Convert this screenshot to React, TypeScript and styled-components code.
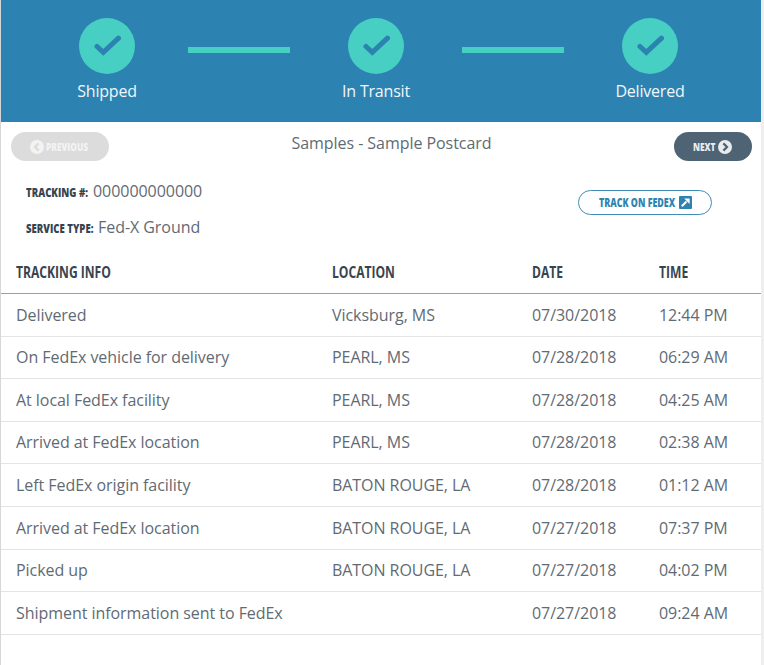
import * as React from "react";
import styled, { createGlobalStyle } from "styled-components";

const GlobalStyle = createGlobalStyle`
  html, body {
    margin: 0;
    padding: 0;
    background: #fff;
    font-family: "Open Sans", "Noto Sans", sans-serif;
  }
`;

const Page = styled.div`
  box-sizing: border-box;
  width: 764px;
  height: 665px;
  overflow: hidden;
  border-left: 1px solid #d4d6d8;
  border-right: 3px solid #eeeeee;
  color: #5a6670;
`;

const Header = styled.div`
  display: flex;
  align-items: flex-start;
  gap: 26px;
  box-sizing: border-box;
  height: 122px;
  padding: 18px 0 0 46px;
  background: #2c82b0;
`;

const Step = styled.div`
  display: flex;
  flex-direction: column;
  align-items: center;
  width: 120px;
  &:first-child {
    margin-right: -5px;
  }
`;

const Circle = styled.div`
  display: flex;
  align-items: center;
  justify-content: center;
  width: 56px;
  height: 56px;
  border-radius: 50%;
  background: #47cfc4;
`;

const StepLabel = styled.div`
  margin-top: 6px;
  font-size: 16px;
  font-weight: 500;
  line-height: 22px;
  letter-spacing: -0.2px;
  color: #f1f7fa;
`;

const Connector = styled.div`
  width: 102px;
  height: 6px;
  margin-top: 29px;
  background: #47cfc4;
`;

const NavRow = styled.div`
  display: flex;
  align-items: center;
  justify-content: space-between;
  height: 29px;
  margin-top: 10px;
  padding: 0 9px 0 10px;
`;

const PillButton = styled.div<{ $disabled?: boolean }>`
  display: flex;
  align-items: center;
  justify-content: center;
  gap: 2px;
  box-sizing: border-box;
  width: ${(p) => (p.$disabled ? "98px" : "78px")};
  height: 29px;
  border-radius: 15px;
  background: ${(p) => (p.$disabled ? "#dcdcdc" : "#4e6475")};
  color: ${(p) => (p.$disabled ? "#f3f3f3" : "#e8ecef")};
  font-size: 11px;
  font-weight: 800;
`;

const Squeezed = styled.span<{ $w: number }>`
  display: inline-block;
  width: ${(p) => p.$w}px;
  transform: scaleX(0.76);
  transform-origin: left center;
  white-space: nowrap;
`;

const NavTitle = styled.div`
  margin-top: -8px;
  font-size: 16px;
  letter-spacing: -0.05px;
  color: #5f6b74;
`;

const InfoRow = styled.div`
  display: flex;
  align-items: flex-start;
  justify-content: space-between;
  margin-top: 20px;
  padding: 0 49px 0 25px;
`;

const InfoList = styled.div`
  display: flex;
  flex-direction: column;
  gap: 15px;
`;

const InfoLine = styled.div`
  display: flex;
  align-items: baseline;
  height: 21px;
  font-size: 16px;
  line-height: 21px;
  letter-spacing: -0.05px;
  color: #5f6b74;
`;

const InfoKey = styled.span<{ $w: number }>`
  display: inline-block;
  width: ${(p) => p.$w}px;
  font-size: 12px;
  font-weight: 800;
  letter-spacing: 0;
  color: #37444e;
  white-space: nowrap;
  transform: scaleX(0.8);
  transform-origin: left center;
`;

const TrackButton = styled.div`
  display: flex;
  align-items: center;
  justify-content: center;
  gap: 2px;
  box-sizing: border-box;
  width: 134px;
  height: 25px;
  margin-top: 9px;
  border: 1px solid #3f8db6;
  border-radius: 13px;
  color: #2f85b2;
  font-size: 12px;
  font-weight: 800;
`;

const TrackLabel = styled.span`
  display: inline-block;
  width: 78px;
  white-space: nowrap;
  transform: scaleX(0.74);
  transform-origin: left center;
`;

const Table = styled.div`
  margin-top: 13px;
`;

const columns = "331px 200px 127px 1fr";

const HeadRow = styled.div`
  display: grid;
  grid-template-columns: ${columns};
  align-items: center;
  box-sizing: border-box;
  height: 43px;
  border-bottom: 1px solid #66b8b6;
`;

const HeadCell = styled.div<{ $lead?: boolean }>`
  margin-left: ${(p) => (p.$lead ? "15px" : "0")};
  font-size: 15.5px;
  font-weight: 700;
  color: #37444e;
  white-space: nowrap;
  transform: scaleX(0.78);
  transform-origin: left center;
`;

const Row = styled.div`
  display: grid;
  grid-template-columns: ${columns};
  align-items: center;
  box-sizing: border-box;
  height: 42.6px;
  padding-bottom: 0.4px;
  border-bottom: 1px solid #e4e4e4;
`;

const Cell = styled.div<{ $lead?: boolean }>`
  padding-left: ${(p) => (p.$lead ? "15px" : "0")};
  font-size: 16px;
  letter-spacing: -0.05px;
  color: #5f6b74;
  white-space: nowrap;
`;

const CheckIcon = () => (
  <svg width="30" height="24" viewBox="0 0 30 24" aria-hidden="true">
    <path
      d="M5 12.5 L11.3 18.3 L26.5 4.2"
      fill="none"
      stroke="#2c82b0"
      strokeWidth="5"
      strokeLinecap="round"
    />
  </svg>
);

const ChevronBadge = ({ dir, fill, mark }: { dir: "left" | "right"; fill: string; mark: string }) => (
  <svg width="14" height="14" viewBox="0 0 14 14" aria-hidden="true">
    <circle cx="7" cy="7" r="7" fill={fill} />
    <path
      d={dir === "left" ? "M8.6 3.4 L5 7 L8.6 10.6" : "M5.4 3.4 L9 7 L5.4 10.6"}
      fill="none"
      stroke={mark}
      strokeWidth="2.2"
    />
  </svg>
);

const ExternalIcon = () => (
  <svg width="13" height="13" viewBox="0 0 13 13" aria-hidden="true">
    <rect width="13" height="13" rx="1" fill="#2c82b0" />
    <path d="M2.8 10.2 L7.5 5.5" fill="none" stroke="#fff" strokeWidth="2" />
    <path d="M5.2 2.6 H10.6 V8 Z" fill="#fff" />
  </svg>
);

const steps = ["Shipped", "In Transit", "Delivered"];

const events = [
  ["Delivered", "Vicksburg, MS", "07/30/2018", "12:44 PM"],
  ["On FedEx vehicle for delivery", "PEARL, MS", "07/28/2018", "06:29 AM"],
  ["At local FedEx facility", "PEARL, MS", "07/28/2018", "04:25 AM"],
  ["Arrived at FedEx location", "PEARL, MS", "07/28/2018", "02:38 AM"],
  ["Left FedEx origin facility", "BATON ROUGE, LA", "07/28/2018", "01:12 AM"],
  ["Arrived at FedEx location", "BATON ROUGE, LA", "07/27/2018", "07:37 PM"],
  ["Picked up", "BATON ROUGE, LA", "07/27/2018", "04:02 PM"],
  ["Shipment information sent to FedEx", "", "07/27/2018", "09:24 AM"],
];

const App: React.FC = () => {
  return (
    <>
      <GlobalStyle />
      <Page>
        <Header>
          {steps.map((label, i) => (
            <React.Fragment key={label}>
              {i > 0 && <Connector />}
              <Step>
                <Circle>
                  <CheckIcon />
                </Circle>
                <StepLabel>{label}</StepLabel>
              </Step>
            </React.Fragment>
          ))}
        </Header>
        <NavRow>
          <PillButton $disabled>
            <ChevronBadge dir="left" fill="#f3f3f3" mark="#dcdcdc" />
            <Squeezed $w={44}>PREVIOUS</Squeezed>
          </PillButton>
          <NavTitle>Samples - Sample Postcard</NavTitle>
          <PillButton>
            <Squeezed $w={23}>NEXT</Squeezed>
            <ChevronBadge dir="right" fill="#e8ecef" mark="#4e6475" />
          </PillButton>
        </NavRow>
        <InfoRow>
          <InfoList>
            <InfoLine>
              <InfoKey $w={67}>TRACKING #:</InfoKey>
              000000000000
            </InfoLine>
            <InfoLine>
              <InfoKey $w={72}>SERVICE TYPE:</InfoKey>
              Fed-X Ground
            </InfoLine>
          </InfoList>
          <TrackButton>
            <TrackLabel>TRACK ON FEDEX</TrackLabel>
            <ExternalIcon />
          </TrackButton>
        </InfoRow>
        <Table>
          <HeadRow>
            <HeadCell $lead>TRACKING INFO</HeadCell>
            <HeadCell>LOCATION</HeadCell>
            <HeadCell>DATE</HeadCell>
            <HeadCell>TIME</HeadCell>
          </HeadRow>
          {events.map((row, i) => (
            <Row key={i}>
              <Cell $lead>{row[0]}</Cell>
              <Cell>{row[1]}</Cell>
              <Cell>{row[2]}</Cell>
              <Cell>{row[3]}</Cell>
            </Row>
          ))}
        </Table>
      </Page>
    </>
  );
};

export default App;
